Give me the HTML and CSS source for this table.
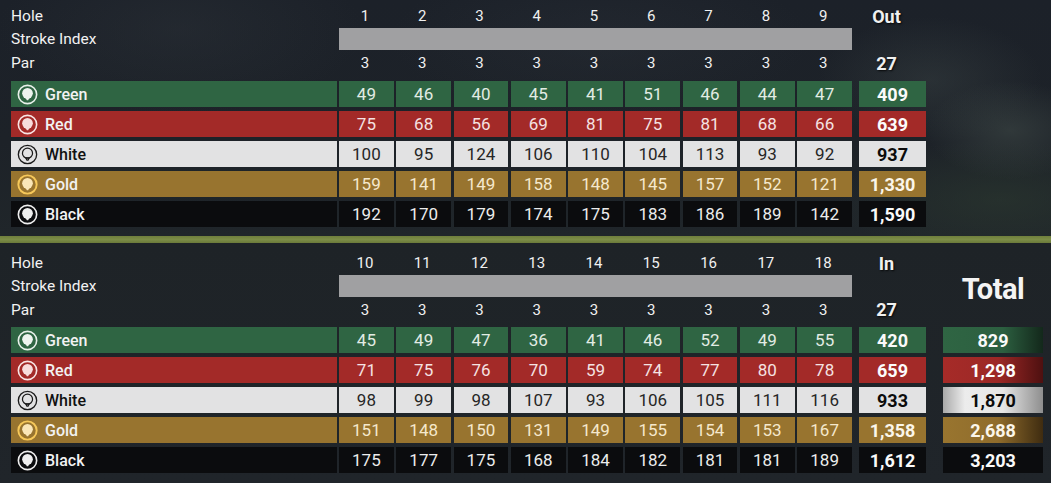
FILE: index.html
```html
<!DOCTYPE html>
<html>
<head>
<meta charset="utf-8">
<link rel="stylesheet" href="styles.css">
</head>
<body>
<div class="card">
  <section class="sec sec-front">
    <div class="head">
      <div class="head-rows">
        <div class="row hdr">
          <div class="lab">Hole</div>
          <div class="holes"><span>1</span><span>2</span><span>3</span><span>4</span><span>5</span><span>6</span><span>7</span><span>8</span><span>9</span></div>
          <div class="out">Out</div>
        </div>
        <div class="row si">
          <div class="lab">Stroke Index</div>
          <div class="bar"></div>
        </div>
        <div class="row par">
          <div class="lab">Par</div>
          <div class="holes"><span>3</span><span>3</span><span>3</span><span>3</span><span>3</span><span>3</span><span>3</span><span>3</span><span>3</span></div>
          <div class="out">27</div>
        </div>
      </div>
    </div>
    <div class="tees">
      <div class="row tee green">
        <div class="lab"><svg class="ico" viewBox="0 0 22 22"><circle class="ring" cx="11" cy="11" r="9.6"/><circle class="ball" cx="11" cy="9.8" r="5.6"/><path class="ball" d="M9 14.4H13L11.7 16.9H10.3Z"/></svg>Green</div>
        <div class="holes"><span>49</span><span>46</span><span>40</span><span>45</span><span>41</span><span>51</span><span>46</span><span>44</span><span>47</span></div>
        <div class="out">409</div>
      </div>
      <div class="row tee red">
        <div class="lab"><svg class="ico" viewBox="0 0 22 22"><circle class="ring" cx="11" cy="11" r="9.6"/><circle class="ball" cx="11" cy="9.8" r="5.6"/><path class="ball" d="M9 14.4H13L11.7 16.9H10.3Z"/></svg>Red</div>
        <div class="holes"><span>75</span><span>68</span><span>56</span><span>69</span><span>81</span><span>75</span><span>81</span><span>68</span><span>66</span></div>
        <div class="out">639</div>
      </div>
      <div class="row tee white">
        <div class="lab"><svg class="ico" viewBox="0 0 22 22"><circle class="ring" cx="11" cy="11" r="9.6"/><circle class="ball" cx="11" cy="9.6" r="5.3"/><path class="ball" d="M9.2 14.6H12.8L11.6 16.8H10.4Z"/></svg>White</div>
        <div class="holes"><span>100</span><span>95</span><span>124</span><span>106</span><span>110</span><span>104</span><span>113</span><span>93</span><span>92</span></div>
        <div class="out">937</div>
      </div>
      <div class="row tee gold">
        <div class="lab"><svg class="ico" viewBox="0 0 22 22"><circle class="ring" cx="11" cy="11" r="9.6"/><circle class="ball" cx="11" cy="9.8" r="5.6"/><path class="ball" d="M9 14.4H13L11.7 16.9H10.3Z"/></svg>Gold</div>
        <div class="holes"><span>159</span><span>141</span><span>149</span><span>158</span><span>148</span><span>145</span><span>157</span><span>152</span><span>121</span></div>
        <div class="out">1,330</div>
      </div>
      <div class="row tee black">
        <div class="lab"><svg class="ico" viewBox="0 0 22 22"><circle class="ring" cx="11" cy="11" r="9.6"/><circle class="ball" cx="11" cy="9.8" r="5.6"/><path class="ball" d="M9 14.4H13L11.7 16.9H10.3Z"/></svg>Black</div>
        <div class="holes"><span>192</span><span>170</span><span>179</span><span>174</span><span>175</span><span>183</span><span>186</span><span>189</span><span>142</span></div>
        <div class="out">1,590</div>
      </div>
    </div>
  </section>

  <div class="divider"></div>

  <section class="sec sec-back">
    <div class="head">
      <div class="head-rows">
        <div class="row hdr">
          <div class="lab">Hole</div>
          <div class="holes"><span>10</span><span>11</span><span>12</span><span>13</span><span>14</span><span>15</span><span>16</span><span>17</span><span>18</span></div>
          <div class="out">In</div>
        </div>
        <div class="row si">
          <div class="lab">Stroke Index</div>
          <div class="bar"></div>
        </div>
        <div class="row par">
          <div class="lab">Par</div>
          <div class="holes"><span>3</span><span>3</span><span>3</span><span>3</span><span>3</span><span>3</span><span>3</span><span>3</span><span>3</span></div>
          <div class="out">27</div>
        </div>
      </div>
      <div class="total-head">Total</div>
    </div>
    <div class="tees">
      <div class="row tee green">
        <div class="lab"><svg class="ico" viewBox="0 0 22 22"><circle class="ring" cx="11" cy="11" r="9.6"/><circle class="ball" cx="11" cy="9.8" r="5.6"/><path class="ball" d="M9 14.4H13L11.7 16.9H10.3Z"/></svg>Green</div>
        <div class="holes"><span>45</span><span>49</span><span>47</span><span>36</span><span>41</span><span>46</span><span>52</span><span>49</span><span>55</span></div>
        <div class="out">420</div>
        <div class="total">829</div>
      </div>
      <div class="row tee red">
        <div class="lab"><svg class="ico" viewBox="0 0 22 22"><circle class="ring" cx="11" cy="11" r="9.6"/><circle class="ball" cx="11" cy="9.8" r="5.6"/><path class="ball" d="M9 14.4H13L11.7 16.9H10.3Z"/></svg>Red</div>
        <div class="holes"><span>71</span><span>75</span><span>76</span><span>70</span><span>59</span><span>74</span><span>77</span><span>80</span><span>78</span></div>
        <div class="out">659</div>
        <div class="total">1,298</div>
      </div>
      <div class="row tee white">
        <div class="lab"><svg class="ico" viewBox="0 0 22 22"><circle class="ring" cx="11" cy="11" r="9.6"/><circle class="ball" cx="11" cy="9.6" r="5.3"/><path class="ball" d="M9.2 14.6H12.8L11.6 16.8H10.4Z"/></svg>White</div>
        <div class="holes"><span>98</span><span>99</span><span>98</span><span>107</span><span>93</span><span>106</span><span>105</span><span>111</span><span>116</span></div>
        <div class="out">933</div>
        <div class="total">1,870</div>
      </div>
      <div class="row tee gold">
        <div class="lab"><svg class="ico" viewBox="0 0 22 22"><circle class="ring" cx="11" cy="11" r="9.6"/><circle class="ball" cx="11" cy="9.8" r="5.6"/><path class="ball" d="M9 14.4H13L11.7 16.9H10.3Z"/></svg>Gold</div>
        <div class="holes"><span>151</span><span>148</span><span>150</span><span>131</span><span>149</span><span>155</span><span>154</span><span>153</span><span>167</span></div>
        <div class="out">1,358</div>
        <div class="total">2,688</div>
      </div>
      <div class="row tee black">
        <div class="lab"><svg class="ico" viewBox="0 0 22 22"><circle class="ring" cx="11" cy="11" r="9.6"/><circle class="ball" cx="11" cy="9.8" r="5.6"/><path class="ball" d="M9 14.4H13L11.7 16.9H10.3Z"/></svg>Black</div>
        <div class="holes"><span>175</span><span>177</span><span>175</span><span>168</span><span>184</span><span>182</span><span>181</span><span>181</span><span>189</span></div>
        <div class="out">1,612</div>
        <div class="total">3,203</div>
      </div>
    </div>
  </section>
</div>
</body>
</html>
```

FILE: styles.css
```css
* { box-sizing: border-box; }
html, body { margin: 0; padding: 0; }
body {
  width: 1051px;
  height: 483px;
  overflow: hidden;
  background: #1f2427;
  font-family: Roboto, "Liberation Sans", sans-serif;
  color: #f0f0f0;
}
.card { width: 1051px; height: 483px; display: flex; flex-direction: column; }

.sec { padding-left: 11px; }
.sec-front {
  height: 236px;
  padding-top: 4px;
  background:
    radial-gradient(ellipse 120px 70px at 1010px 130px, rgba(72, 84, 80, 0.45), transparent 70%),
    radial-gradient(ellipse 160px 90px at 930px 80px, rgba(66, 76, 76, 0.35), transparent 70%),
    radial-gradient(ellipse 220px 80px at 1000px 200px, rgba(44, 58, 48, 0.55), transparent 75%),
    radial-gradient(ellipse 260px 120px at 180px 30px, rgba(48, 54, 60, 0.35), transparent 70%),
    radial-gradient(ellipse 300px 110px at 600px 40px, rgba(44, 50, 58, 0.35), transparent 70%),
    linear-gradient(180deg, #1c2129 0%, #1d2228 60%, #20262a 100%);
}
.divider { height: 7px; background: linear-gradient(180deg, #6f7f3c, #7c8d47 50%, #6b7a3a); flex: none; }
.sec-back {
  flex: 1;
  padding-top: 8px;
  background: linear-gradient(180deg, #1e2327, #20252a);
}

.head { display: flex; }
.head-rows { display: flex; flex-direction: column; }

.row { display: flex; align-items: stretch; }
.lab {
  width: 326px;
  margin-right: 2px;
  display: flex;
  align-items: center;
  font-size: 15.5px;
  color: #f2f2f2;
}
.holes { display: flex; gap: 2.5px; width: 513px; }
.holes span {
  width: 54.8px;
  display: flex;
  align-items: center;
  justify-content: center;
}
.out {
  width: 67px;
  margin-left: 7px;
  display: flex;
  align-items: center;
  justify-content: center;
  font-weight: 700;
}

.hdr { height: 24px; font-size: 15px; }
.hdr .holes span { padding-right: 3px; }
.hdr .out, .par .out { font-size: 18px; padding-right: 12px; text-shadow: 1px 1px 2px rgba(0,0,0,0.8); }
.si { height: 22px; }
.bar { width: 513px; background: #a0a0a2; }
.par { height: 26px; font-size: 15px; }
.sec-back .par { height: 25px; }
.par .holes span { padding-right: 3px; }

.total-head {
  width: 100px;
  margin-left: 17px;
  display: flex;
  align-items: center;
  justify-content: center;
  font-size: 29px;
  font-weight: 700;
  color: #f4f4f4;
  letter-spacing: -0.5px;
  padding-top: 4px;
}

.tees { display: flex; flex-direction: column; gap: 4px; margin-top: 5px; }
.tee { height: 26px; font-size: 17px; }
.tee .lab { font-size: 16px; font-weight: 500; padding-left: 6px; }
.tee .out { font-size: 18px; }
.ico { width: 21px; height: 21px; margin-right: 7px; flex: none; }
.ring { fill: none; stroke-width: 1.7; }

.total {
  width: 100px;
  margin-left: 17px;
  display: flex;
  align-items: center;
  justify-content: center;
  font-size: 18px;
  font-weight: 700;
}

.green .lab, .green .holes span, .green .out { background: #2f6543; }
.green { color: #e2ece4; }
.green .out, .green .total { color: #fafafa; }
.green .ring { stroke: #e8f0ea; }
.green .ball { fill: #eef3ef; }
.green .total { background: linear-gradient(90deg, #2f6543 0%, #2c5f40 60%, #13281b 100%); }

.red .lab, .red .holes span, .red .out { background: #a32a28; }
.red { color: #f5e2e2; }
.red .out, .red .total { color: #fcfcfc; }
.red .ring { stroke: #f8e4e4; }
.red .ball { fill: #f7dcdc; }
.red .total { background: linear-gradient(90deg, #a62b28 0%, #9c2826 55%, #4e1010 100%); }

.white .lab, .white .holes span, .white .out { background: #e2e2e3; }
.white { color: #262626; }
.white .lab { color: #111; }
.white .out, .white .total { color: #0c0c0c; }
.white .ring { stroke: #1a1a1a; stroke-width: 1.4; }
.white .ball { fill: none; stroke: #1a1a1a; stroke-width: 1.3; }
.white .total { background: linear-gradient(90deg, #a9a9a9 0%, #ececec 22%, #e6e6e6 60%, #8e8e8e 100%); }

.gold .lab, .gold .holes span, .gold .out { background: #98742f; }
.gold { color: #f5e8cc; }
.gold .out, .gold .total { color: #fbf6ea; }
.gold .ring { stroke: #f6c85a; stroke-width: 2; }
.gold .ball { fill: #fae6b8; }
.gold .total { background: linear-gradient(90deg, #99752f 0%, #8f6c2c 55%, #3f2c10 100%); }

.black .lab, .black .holes span, .black .out { background: #0b0c0e; }
.black { color: #ececec; }
.black .out, .black .total { color: #fafafa; }
.black .ring { stroke: #eeeeee; }
.black .ball { fill: #eeeeee; }
.black .total { background: #0b0c0e; }
```
